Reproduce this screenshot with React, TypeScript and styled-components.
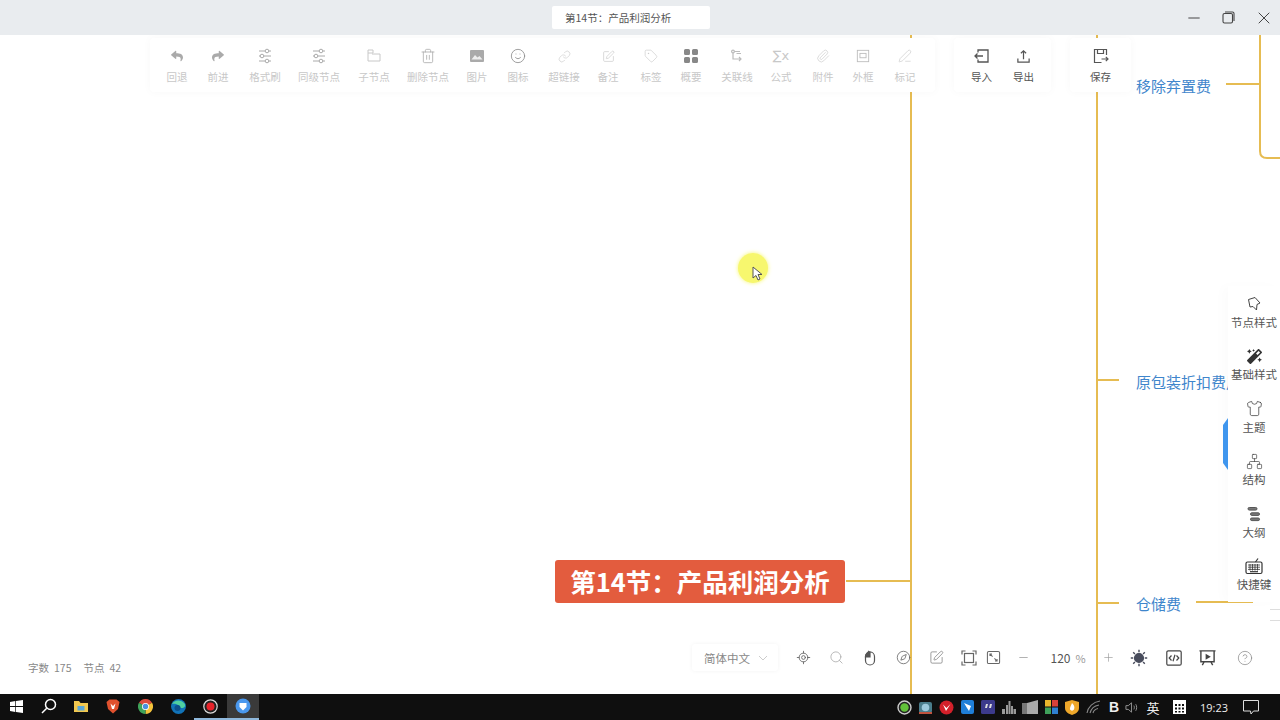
import React from 'react';
import styled, { createGlobalStyle } from 'styled-components';
import {
  CircleHelp, Compass, Link, LocateFixed, Minus, Network, Paperclip, PenLine, Plus,
  Search, Shirt, Smile, SquarePen, Tag, Trash2, X,
} from 'lucide-react';
import { BsGridFill } from 'react-icons/bs';
import { FaMagic, FaReply, FaShare } from 'react-icons/fa';

const GlobalStyle = createGlobalStyle`
  html, body { margin: 0; padding: 0; background: #fff; }
  body { font-family: "Noto Sans CJK SC", "Liberation Sans", sans-serif; }
`;

const LINE = '#e6bc52';

const BrushIcon = () => (
  <svg width="16" height="16" viewBox="0 0 16 16" fill="none" stroke="#aaa" strokeWidth="1">
    <path d="M2 3h6M12 3h2M2 8h1M7 8h7M2 13h6M12 13h2" />
    <circle cx="10" cy="3" r="1.8" />
    <circle cx="5" cy="8" r="1.8" />
    <circle cx="10" cy="13" r="1.8" />
  </svg>
);
const PictureIcon = () => (
  <svg width="14" height="12" viewBox="0 0 14 12">
    <rect width="14" height="12" rx="1" fill="#aaa" />
    <path d="M1.500 9.500 5 5l2.500 2.500L9.500 6l3 3.500z" fill="#eee" />
  </svg>
);
const ChildNodeIcon = () => (
  <svg width="16" height="16" viewBox="0 0 16 16" fill="none" stroke="currentColor" strokeWidth="1">
    <path d="M2 2h5v3H2zM2 5v8h12V6H6" />
  </svg>
);
const RelationIcon = () => (
  <svg width="16" height="16" viewBox="0 0 16 16" fill="none" stroke="#bbb" strokeWidth="1.2">
    <circle cx="4" cy="3.5" r="1.4" />
    <path d="M5.500 3.500H11M4 5v6h8M10 9l2 2-2 2M12 5.500H7.500" />
  </svg>
);
const SigmaIcon = () => <SigmaText>∑x</SigmaText>;
const FrameIcon = () => (
  <svg width="14" height="14" viewBox="0 0 16 16" fill="none" stroke="#bbb" strokeWidth="1">
    <rect x="1.5" y="1.5" width="13" height="13" />
    <rect x="4.5" y="5" width="7" height="5" />
  </svg>
);
const ImportIcon = () => (
  <svg width="16" height="16" viewBox="0 0 16 16" fill="none" stroke="currentColor" strokeWidth="1.3">
    <path d="M4 4.500V2h10v12H4v-2.500M1 8h8M3.500 5.500 1 8l2.500 2.500" />
  </svg>
);
const ExportIcon = () => (
  <svg width="15" height="15" viewBox="0 0 16 16" fill="none" stroke="currentColor" strokeWidth="1.3">
    <path d="M2 10v4h12v-4M8 11V2M5.200 4.600 8 2l2.800 2.600" />
  </svg>
);
const SaveIcon = () => (
  <svg width="16" height="16" viewBox="0 0 16 16" fill="none" stroke="currentColor" strokeWidth="1.2">
    <path d="M13.500 7V1.500h-12v13h7M4.500 1.500v4h6v-4M8.500 11h6.500M12.800 8.800 15 11l-2.200 2.200" />
  </svg>
);
const StyleIcon = () => (
  <svg width="16" height="16" viewBox="0 0 16 16" fill="none" stroke="currentColor" strokeWidth="1">
    <path d="M2.500 3.500 9 1.500l5 5.500-3 1.500-.5 5.500-3.500-3.500-3 .5z" />
  </svg>
);
const OutlineIcon = () => (
  <svg width="16" height="16" viewBox="0 0 16 16" fill="#777" stroke="#555" strokeWidth="1">
    <rect x="2" y="1.500" width="9" height="2.600" rx="1.300" />
    <rect x="4.500" y="6.800" width="9" height="2.600" rx="1.300" />
    <rect x="4.500" y="12" width="9" height="2.600" rx="1.300" />
  </svg>
);
const KeyboardIcon = () => (
  <svg width="18" height="18" viewBox="0 0 18 18" fill="none" stroke="#333" strokeWidth="1.200">
    <path d="M13 1.500 10.500 5" />
    <rect x="1" y="5" width="16" height="11.500" rx="1.500" />
    <path d="M3 8h12M3 10.200h12M3 12.400h12M5 7v6.500M7.500 7v6.500M10 7v6.500M12.500 7v6.500" strokeWidth=".8" />
    <path d="M5 14.700h8" />
  </svg>
);
const MouseIcon = () => (
  <svg width="16" height="16" viewBox="0 0 16 16" fill="none" stroke="#555" strokeWidth="1.2">
    <rect x="3.500" y="2" width="9" height="13" rx="4.500" />
    <path d="M8 2v5H3.500V6.500A4.500 4.500 0 0 1 8 2z" fill="#555" />
    <path d="M6 1l2 1.500" />
  </svg>
);
const FitIcon = () => (
  <svg width="16" height="16" viewBox="0 0 16 16" fill="none" stroke="#666" strokeWidth="1.200">
    <path d="M1 4.500V1h3.500M11.500 1H15v3.500M15 11.500V15h-3.500M4.500 15H1v-3.500" />
    <rect x="3.500" y="3.500" width="9" height="9" />
  </svg>
);
const ExpandIcon = () => (
  <svg width="15" height="15" viewBox="0 0 16 16" fill="none" stroke="#666" strokeWidth="1.100">
    <rect x="1.500" y="1.500" width="13" height="13" rx="1.500" />
    <path d="M4.200 4.200 7 7M4.200 6.400V4.200h2.200M11.800 11.800 9 9M11.800 9.600v2.200H9.600" />
  </svg>
);
const SunIcon = () => (
  <svg width="18" height="18" viewBox="0 0 18 18" stroke="#484c5c" strokeWidth="1.400">
    <circle cx="9" cy="9" r="4.400" fill="#484c5c" />
    <path d="M9 .8v2.400M9 14.800v2.400M.8 9h2.400M14.800 9h2.400M3.200 3.200 4.900 4.900M13.100 13.100l1.700 1.700M14.800 3.200l-1.700 1.700M4.900 13.100l-1.700 1.700" />
  </svg>
);
const CodeIcon = () => (
  <svg width="16" height="16" viewBox="0 0 16 16" fill="none" stroke="#444" strokeWidth="1.200">
    <rect x=".8" y=".8" width="14.400" height="14.400" rx="1.500" />
    <path d="M5.500 5.500 3.200 8l2.300 2.500M10.500 5.500 12.800 8l-2.300 2.500M9 4.800 7 11.200" />
  </svg>
);
const PresentIcon = () => (
  <svg width="17" height="17" viewBox="0 0 18 18" fill="none" stroke="#444" strokeWidth="1.500">
    <path d="M.5 2h17M2 2v11.500h14V2M5.500 13.500l-2 3.500M12.500 13.500l2 3.500" />
    <path d="M7 5l5.500 3.200L7 11.300z" fill="#444" stroke="none" />
  </svg>
);

const WinLogo = () => (
  <svg width="13" height="13" viewBox="0 0 13 13" fill="#fff">
    <path d="M0 1.900 5.300 1.100v5H0zM6 1l7-1v6.100H6zM0 6.900h5.300v5L0 11.100zM6 6.900h7V13l-7-1z" />
  </svg>
);
const SearchLogo = () => (
  <svg width="16" height="16" viewBox="0 0 16 16" fill="none" stroke="#fff" strokeWidth="1.500">
    <circle cx="9.500" cy="6.500" r="5" />
    <path d="M5.700 10.300 1 15" />
  </svg>
);
const FolderLogo = () => (
  <svg width="14" height="13" viewBox="0 0 14 13">
    <path d="M0 1h5l1.500 2H14v9H0z" fill="#f2c84f" />
    <rect x="3.500" y="6" width="7" height="4.500" fill="#5aa7d8" />
  </svg>
);
const BraveLogo = () => (
  <svg width="14" height="15" viewBox="0 0 14 15">
    <path d="M3.500.5h7l3 2.500L12 10l-5 4.500L2 10 .5 3z" fill="#e0512e" />
    <path d="M4.500 4.500 7 7l2.500-2.500L8 10H6z" fill="#fff" />
  </svg>
);
const ChromeLogo = () => (
  <svg width="15" height="15" viewBox="0 0 15 15">
    <path d="M7.500 7.500 1 3.750A7.500 7.500 0 0 1 14 3.750z" fill="#dd4b3e" />
    <path d="M7.500 7.500 14 3.750A7.500 7.500 0 0 1 7.500 15z" fill="#f5c33b" />
    <path d="M7.500 7.500V15A7.500 7.500 0 0 1 1 3.750z" fill="#3fa35a" />
    <circle cx="7.500" cy="7.500" r="3.500" fill="#fff" />
    <circle cx="7.500" cy="7.500" r="2.700" fill="#4a8fe0" />
  </svg>
);
const EdgeLogo = () => (
  <svg width="15" height="15" viewBox="0 0 15 15">
    <circle cx="7.500" cy="7.500" r="7.500" fill="#1173b8" />
    <path d="M1 5c2-4 9-5 12.500-.5C15.500 8 12 9.500 9.500 9 9 6 4 4 1 5z" fill="#4fd0a0" />
    <circle cx="6.500" cy="9" r="3" fill="#0c4f8c" />
  </svg>
);
const RecordLogo = () => (
  <svg width="15" height="15" viewBox="0 0 15 15">
    <circle cx="7.500" cy="7.500" r="6.700" fill="#222" stroke="#ddd" strokeWidth="1.200" />
    <circle cx="7.500" cy="7.500" r="4" fill="#e8232a" />
  </svg>
);
const AppLogo = () => (
  <svg width="16" height="16" viewBox="0 0 16 16">
    <circle cx="8" cy="8" r="7.500" fill="#4a98ee" />
    <path d="M4.500 5h7v4L8 12.500 4.500 9z" fill="#fff" />
  </svg>
);

const TrayGreen = () => (
  <svg width="15" height="15" viewBox="0 0 15 15">
    <circle cx="7.500" cy="7.500" r="6.500" fill="#222" stroke="#ccc" strokeWidth="1.400" />
    <circle cx="7.500" cy="7.500" r="4.200" fill="#62c23a" />
  </svg>
);
const TrayCam = () => (
  <svg width="15" height="15" viewBox="0 0 15 15">
    <rect x="1" y="2" width="13" height="11" rx="2" fill="#4a7d8c" />
    <circle cx="7.500" cy="7.500" r="3.800" fill="#9cc9dc" />
    <rect x="1" y="12" width="13" height="2" fill="#c0533e" />
  </svg>
);
const TrayV = () => (
  <svg width="15" height="15" viewBox="0 0 15 15">
    <circle cx="7.500" cy="7.500" r="7" fill="#d3202a" />
    <path d="M4 4.500 7 11l4.500-7L7.500 8z" fill="#fff" />
  </svg>
);
const TrayBlue = () => (
  <svg width="13" height="14" viewBox="0 0 13 14">
    <rect width="13" height="14" rx="2" fill="#1f7fd8" />
    <path d="M3 3l7 3-2 5-2-3z" fill="#fff" />
  </svg>
);
const TrayPurple = () => (
  <svg width="14" height="14" viewBox="0 0 14 14">
    <rect width="14" height="14" rx="1.500" fill="#3c3a8c" />
    <path d="M5 4h2L6 8H4zM9 4h2l-1 4H8z" fill="#ddd" />
  </svg>
);
const TrayBars = () => (
  <svg width="14" height="13" viewBox="0 0 14 13" fill="#9a9a9a">
    <path d="M0 13V8h3v5zM4 13V4h2v9zM6.500 13V0h2v13zM9 13V5h2v8zM11.500 13V8H14v5z" />
  </svg>
);
const TrayPanel = () => (
  <svg width="16" height="14" viewBox="0 0 16 14">
    <path d="M0 3h5V14H0z" fill="#777" />
    <path d="M5 3l11-3v14H5z" fill="#aaa" />
  </svg>
);
const TrayTiles = () => (
  <svg width="13" height="14" viewBox="0 0 13 14">
    <rect width="6" height="6.500" fill="#e8b52c" />
    <rect x="7" width="6" height="6.500" fill="#d8413a" />
    <rect y="7.500" width="6" height="6.500" fill="#3fa05a" />
    <rect x="7" y="7.500" width="6" height="6.500" fill="#2f7fd0" />
  </svg>
);
const TrayShield = () => (
  <svg width="14" height="15" viewBox="0 0 14 15">
    <path d="M7 0l7 2v6c0 4-4 6-7 7-3-1-7-3-7-7V2z" fill="#eea72a" />
    <path d="M7 3c2 2 3 4 2 6.500-1 1.500-3 1.500-4 0C4.500 8 6 6 7 3z" fill="#fff" />
  </svg>
);
const TrayWifi = () => (
  <svg width="15" height="14" viewBox="0 0 15 14" fill="none" stroke="#888" strokeWidth="1.100">
    <path d="M1 13C2 7 7 2 14 1M4 13c1-4 4-7 9-8M7 13c.5-2 2.500-4 5-4.500" />
  </svg>
);
const TraySpeaker = () => (
  <svg width="14" height="13" viewBox="0 0 15 13" fill="none" stroke="#999" strokeWidth="1">
    <path d="M1 4.500h2.500L7 1.500v10l-3.500-3H1zM9.500 4.500c.7 1.200.7 2.800 0 4M11.500 3c1.300 2 1.300 5 0 7" />
  </svg>
);
const TrayGrid = () => (
  <svg width="13" height="14" viewBox="0 0 13 14" fill="#fff">
    <path d="M0 0h13v14H0zM2 4v2h2V4zM5.500 4v2h2V4zM9 4v2h2V4zM2 7.500v2h2v-2zM5.500 7.500v2h2v-2zM9 7.500v2h2v-2zM2 11v1.500h2V11zM5.500 11v1.500h2V11zM9 11v1.500h2V11z" fillRule="evenodd" />
  </svg>
);
const TrayNotice = () => (
  <svg width="16" height="15" viewBox="0 0 16 15" fill="none" stroke="#ddd" strokeWidth="1">
    <path d="M.5.500h15v10.500h-5L8 14l-.5-3h-7z" />
  </svg>
);
const TrayLetter = () => <TrayB>B</TrayB>;
const RestoreIcon = () => (
  <svg width="13" height="13" viewBox="0 0 13 13" fill="none" stroke="#444" strokeWidth="1.100">
    <rect x="1" y="2.500" width="9.500" height="9.500" rx="1.500" />
    <path d="M3 1h7.500A1.500 1.500 0 0 1 12 2.500V10" />
  </svg>
);

// gap = space to the previous item, the real toolbar is not quite even
const editItems: { label: string; gap: number; icon: React.ReactNode }[] = [
  { label: '回退', gap: 0, icon: <FaReply size={12} color="#aaa" /> },
  { label: '前进', gap: 20, icon: <FaShare size={12} color="#aaa" /> },
  { label: '格式刷', gap: 20.75, icon: <BrushIcon /> },
  { label: '同级节点', gap: 17.25, icon: <BrushIcon /> },
  { label: '子节点', gap: 18.25, icon: <ChildNodeIcon /> },
  { label: '删除节点', gap: 17.25, icon: <Trash2 size={16} strokeWidth={1.2} color="#aaa" /> },
  { label: '图片', gap: 17.5, icon: <PictureIcon /> },
  { label: '图标', gap: 20, icon: <Smile size={16} strokeWidth={1.2} color="#888" /> },
  { label: '超链接', gap: 19.75, icon: <Link size={13} strokeWidth={1.1} /> },
  { label: '备注', gap: 17.75, icon: <SquarePen size={13} strokeWidth={1.2} /> },
  { label: '标签', gap: 22, icon: <Tag size={14} strokeWidth={1.1} /> },
  { label: '概要', gap: 19, icon: <BsGridFill size={16} color="#888" /> },
  { label: '关联线', gap: 19.75, icon: <RelationIcon /> },
  { label: '公式', gap: 17.75, icon: <SigmaIcon /> },
  { label: '附件', gap: 21, icon: <Paperclip size={14} strokeWidth={1.1} /> },
  { label: '外框', gap: 19, icon: <FrameIcon /> },
  { label: '标记', gap: 21, icon: <PenLine size={14} strokeWidth={1.1} /> },
];

const sideItems: { label: string; icon: React.ReactNode }[] = [
  { label: '节点样式', icon: <StyleIcon /> },
  { label: '基础样式', icon: <FaMagic size={15} color="#333" /> },
  { label: '主题', icon: <Shirt size={17} strokeWidth={1.1} /> },
  { label: '结构', icon: <Network size={17} strokeWidth={1} /> },
  { label: '大纲', icon: <OutlineIcon /> },
  { label: '快捷键', icon: <KeyboardIcon /> },
];

const viewTools: { width: number; icon: React.ReactNode }[] = [
  { width: 34, icon: <LocateFixed size={15} color="#666" strokeWidth={1.4} /> },
  { width: 33, icon: <Search size={15} color="#aaa" strokeWidth={1.3} /> },
  { width: 34, icon: <MouseIcon /> },
  { width: 33, icon: <Compass size={15} color="#666" strokeWidth={1.3} /> },
  { width: 33, icon: <SquarePen size={15} color="#888" strokeWidth={1.3} /> },
  { width: 31, icon: <FitIcon /> },
  { width: 19, icon: <ExpandIcon /> },
  { width: 41, icon: <Minus size={13} color="#888" strokeWidth={1.2} /> },
];

const taskApps: { id: string; active?: boolean; running?: boolean; icon: React.ReactNode }[] = [
  { id: 'start', icon: <WinLogo /> },
  { id: 'search', icon: <SearchLogo /> },
  { id: 'files', icon: <FolderLogo /> },
  { id: 'brave', icon: <BraveLogo /> },
  { id: 'chrome', icon: <ChromeLogo /> },
  { id: 'edge', icon: <EdgeLogo /> },
  { id: 'record', running: true, icon: <RecordLogo /> },
  { id: 'mind', active: true, running: true, icon: <AppLogo /> },
];

const trayIcons: React.ReactNode[] = [
  <TrayGreen />, <TrayCam />, <TrayV />, <TrayBlue />, <TrayPurple />, <TrayBars />, <TrayPanel />,
  <TrayTiles />, <TrayShield />, <TrayWifi />, <TrayLetter />,
];

export default function App() {
  return (
    <Page>
      <GlobalStyle />
      <TitleBar>
        <DocTab>第14节：产品利润分析</DocTab>
        <WindowControls>
          <WindowButton><Minus size={18} strokeWidth={1.2} /></WindowButton>
          <WindowButton><RestoreIcon /></WindowButton>
          <WindowButton><X size={20} strokeWidth={1.1} /></WindowButton>
        </WindowControls>
      </TitleBar>

      <Canvas>
        <MapLines viewBox="0 35 1280 659" fill="none" stroke={LINE} strokeWidth="2">
          <path d="M911 35V694M846 581H911" />
          <path d="M1097 35V694M1097 380H1119M1097 603H1119" />
          <path d="M1226 84H1260M1260 35V151Q1260 158 1267 158H1280" />
          <path d="M1196 602H1253" />
        </MapLines>

        <RootNode>第14节：产品利润分析</RootNode>
        <TopicNode $x={1136} $y={86}>移除弃置费</TopicNode>
        <TopicNode $x={1136} $y={382}>原包装折扣费用</TopicNode>
        <TopicNode $x={1136} $y={604}>仓储费</TopicNode>

        <Toolbar>
          <ToolGroup $pad={16.5} $padEnd={19.5}>
            {editItems.map(item => (
              <ToolItem key={item.label} $gap={item.gap}>
                <ToolIcon>{item.icon}</ToolIcon>
                <ToolLabel>{item.label}</ToolLabel>
              </ToolItem>
            ))}
          </ToolGroup>
          <ToolGroup $pad={17} $enabled>
            <ToolItem>
              <ToolIcon><ImportIcon /></ToolIcon>
              <ToolLabel>导入</ToolLabel>
            </ToolItem>
            <ToolItem $gap={21}>
              <ToolIcon><ExportIcon /></ToolIcon>
              <ToolLabel>导出</ToolLabel>
            </ToolItem>
          </ToolGroup>
          <ToolGroup $pad={20} $enabled>
            <ToolItem>
              <ToolIcon><SaveIcon /></ToolIcon>
              <ToolLabel>保存</ToolLabel>
            </ToolItem>
          </ToolGroup>
        </Toolbar>

        <CursorHalo>
          <svg width="11" height="15" viewBox="0 0 11 15">
            <path d="M1 1v11l3-2.500 2 4.500 2-1-2-4.500h4z" fill="#fff" stroke="#555" strokeWidth="1" />
          </svg>
        </CursorHalo>

        <SidePanel>
          <ActiveMark />
          {sideItems.map(item => (
            <SideItem key={item.label}>
              <SideIcon>{item.icon}</SideIcon>
              <SideLabel>{item.label}</SideLabel>
            </SideItem>
          ))}
        </SidePanel>

        <MiniMark>
          <MiniRow />
          <MiniRow />
        </MiniMark>

        <Counts>
          <span>字数</span><CountValue>175</CountValue>
          <span>节点</span><CountValue>42</CountValue>
        </Counts>

        <ViewBar>
          <LangSelect>
            简体中文
            <svg width="10" height="6" viewBox="0 0 10 6" fill="none" stroke="#ccc" strokeWidth="1">
              <path d="M1 1l4 4 4-4" />
            </svg>
          </LangSelect>
          {viewTools.map((tool, i) => (
            <ViewCell key={i} $width={tool.width}>{tool.icon}</ViewCell>
          ))}
          <ZoomValue>120</ZoomValue>
          <ZoomUnit>%</ZoomUnit>
          <ViewCell $width={38}><Plus size={13} color="#999" strokeWidth={1.2} /></ViewCell>
          <ViewCell $width={22}><SunIcon /></ViewCell>
          <ViewCell $width={48}><CodeIcon /></ViewCell>
          <ViewCell $width={20}><PresentIcon /></ViewCell>
          <ViewCell $width={54}><CircleHelp size={16} color="#888" strokeWidth={1.1} /></ViewCell>
        </ViewBar>
      </Canvas>

      <Taskbar>
        <TaskApps>
          {taskApps.map(app => (
            <TaskCell key={app.id} $active={app.active} $running={app.running}>{app.icon}</TaskCell>
          ))}
        </TaskApps>
        <Tray>
          {trayIcons.map((icon, i) => <TrayCell key={i}>{icon}</TrayCell>)}
          <TrayCell $width={15}><TraySpeaker /></TrayCell>
          <ImeText>英</ImeText>
          <TrayCell $width={25}><TrayGrid /></TrayCell>
          <Clock>19:23</Clock>
          <TrayCell $width={29}><TrayNotice /></TrayCell>
        </Tray>
      </Taskbar>
    </Page>
  );
}

const Page = styled.div`
  width: 1280px;
  height: 720px;
  display: flex;
  flex-direction: column;
  overflow: hidden;
  background: #fff;
`;

const TitleBar = styled.div`
  height: 35px;
  flex: none;
  position: relative;
  z-index: 3;
  display: flex;
  align-items: center;
  justify-content: space-between;
  padding-left: 552px;
  box-sizing: border-box;
  background: #e9ecef;
`;

const DocTab = styled.div`
  width: 158px;
  height: 23px;
  margin-top: -1px;
  padding-left: 13px;
  box-sizing: border-box;
  background: #fff;
  border-radius: 2px;
  color: #555;
  font-size: 10.5px;
  line-height: 23px;
`;

const WindowControls = styled.div`
  display: flex;
  margin-right: -1px;
  color: #333;
`;

const WindowButton = styled.div`
  width: 35px;
  height: 24px;
  display: flex;
  align-items: center;
  justify-content: center;
`;

const Canvas = styled.div`
  flex: 1;
  position: relative;
  overflow: hidden;
`;

const MapLines = styled.svg`
  position: absolute;
  inset: 0;
  width: 1280px;
  height: 659px;
`;

const RootNode = styled.div`
  position: absolute;
  left: 555px;
  top: 525px;
  width: 290px;
  height: 43px;
  border-radius: 3px;
  background: #e35c3e;
  color: #fff;
  font-size: 25.5px;
  font-weight: 700;
  line-height: 42px;
  text-align: center;
  white-space: nowrap;
`;

// the side panel covers the end of a long topic, so the box stops at its edge
const TopicNode = styled.div<{ $x: number; $y: number }>`
  position: absolute;
  left: ${p => p.$x}px;
  top: ${p => p.$y - 35 - 11}px;
  max-width: 92px;
  height: 22px;
  overflow: hidden;
  color: #3f86cc;
  font-size: 15px;
  line-height: 22px;
  white-space: nowrap;
`;

const Toolbar = styled.div`
  position: absolute;
  left: 150px;
  top: 3px;
  display: flex;
  gap: 19px;
`;

const ToolGroup = styled.div<{ $pad: number; $padEnd?: number; $enabled?: boolean }>`
  display: flex;
  height: 54px;
  padding: 9px ${p => p.$padEnd ?? p.$pad}px 0 ${p => p.$pad}px;
  box-sizing: border-box;
  background: #fff;
  border-radius: 4px;
  box-shadow: 0 0 10px rgba(0, 0, 0, 0.03);
  color: ${p => (p.$enabled ? '#555' : '#c8c8c8')};
`;

const ToolItem = styled.div<{ $gap?: number }>`
  display: flex;
  flex-direction: column;
  align-items: center;
  margin-left: ${p => p.$gap ?? 0}px;
`;

const ToolIcon = styled.div`
  height: 18px;
  display: flex;
  align-items: center;
  justify-content: center;
`;

const ToolLabel = styled.div`
  margin-top: 4px;
  font-size: 10.5px;
  line-height: 16px;
  white-space: nowrap;
`;

const SigmaText = styled.span`
  font-size: 13px;
  line-height: 16px;
  font-family: "DejaVu Sans", sans-serif;
`;

const CursorHalo = styled.div`
  position: absolute;
  left: 738px;
  top: 218px;
  width: 30px;
  height: 30px;
  border-radius: 50%;
  background: #f7f76e;
  box-shadow: 0 0 4px #f7f76e;
  & svg {
    position: absolute;
    left: 14px;
    top: 13px;
  }
`;

const SidePanel = styled.div`
  position: absolute;
  right: 0;
  top: 251px;
  width: 52px;
  height: 316px;
  background: #fff;
  box-shadow: -6px 0 10px rgba(0, 0, 0, 0.015);
`;

const ActiveMark = styled.div`
  position: absolute;
  left: -5px;
  top: 132px;
  width: 5px;
  height: 52px;
  background: #3f96ee;
  clip-path: polygon(100% 0, 100% 100%, 0 calc(100% - 7px), 0 7px);
`;

const SideItem = styled.div`
  height: 52.5px;
  display: flex;
  flex-direction: column;
  align-items: center;
  justify-content: center;
  color: #444;
`;

const SideIcon = styled.div`
  height: 20px;
  display: flex;
  align-items: center;
  justify-content: center;
`;

const SideLabel = styled.div`
  font-size: 11.5px;
  line-height: 17px;
  color: #555;
  white-space: nowrap;
`;

const MiniMark = styled.div`
  position: absolute;
  right: 0;
  top: 568px;
  width: 10px;
  height: 30px;
  display: flex;
  flex-direction: column;
  gap: 10px;
  padding-top: 6px;
  box-sizing: border-box;
`;

const MiniRow = styled.div`
  height: 1px;
  background: #ddd;
`;

const Counts = styled.div`
  position: absolute;
  left: 28px;
  top: 625px;
  display: flex;
  color: #888;
  font-size: 10.5px;
  line-height: 16px;
`;

const CountValue = styled.span`
  margin: 0 12px 0 5px;
`;

const ViewBar = styled.div`
  position: absolute;
  left: 692px;
  top: 609px;
  height: 27px;
  display: flex;
  align-items: center;
`;

const LangSelect = styled.div`
  width: 86px;
  height: 27px;
  padding: 0 10px 0 12px;
  box-sizing: border-box;
  display: flex;
  align-items: center;
  justify-content: space-between;
  background: #fff;
  border-radius: 3px;
  box-shadow: 0 0 4px rgba(0, 0, 0, 0.05);
  color: #888;
  font-size: 11.5px;
  margin-right: 8px;
`;

const ViewCell = styled.div<{ $width: number }>`
  width: ${p => p.$width}px;
  height: 20px;
  flex: none;
  display: flex;
  align-items: center;
  justify-content: center;
`;

const ZoomValue = styled.span`
  width: 22px;
  margin-left: 5.5px;
  text-align: center;
  color: #555;
  font-size: 12px;
`;

const ZoomUnit = styled.span`
  width: 18px;
  text-align: center;
  color: #999;
  font-size: 11px;
`;

const Taskbar = styled.div`
  height: 26px;
  flex: none;
  position: relative;
  z-index: 3;
  display: flex;
  justify-content: space-between;
  background: #0f0f0f;
`;

const TaskApps = styled.div`
  display: flex;
`;

const TaskCell = styled.div<{ $active?: boolean; $running?: boolean }>`
  width: 32.4px;
  height: 26px;
  box-sizing: border-box;
  display: flex;
  align-items: center;
  justify-content: center;
  background: ${p => (p.$active ? '#3a3a3a' : 'transparent')};
  border-bottom: 2px solid ${p => (p.$running ? '#8fb8dc' : 'transparent')};
`;

const Tray = styled.div`
  display: flex;
  align-items: center;
  padding-right: 14.5px;
`;

const TrayCell = styled.div<{ $width?: number }>`
  width: ${p => p.$width ?? 21}px;
  height: 26px;
  display: flex;
  align-items: center;
  justify-content: center;
  flex: none;
`;

const TrayB = styled.span`
  color: #eee;
  font-size: 14px;
  font-weight: 700;
  font-family: "Liberation Sans", sans-serif;
`;

const ImeText = styled.span`
  width: 27px;
  text-align: center;
  color: #eee;
  font-size: 13px;
`;

const Clock = styled.span`
  width: 45px;
  text-align: center;
  color: #eee;
  font-size: 11px;
  font-family: "Open Sans", sans-serif;
`;
